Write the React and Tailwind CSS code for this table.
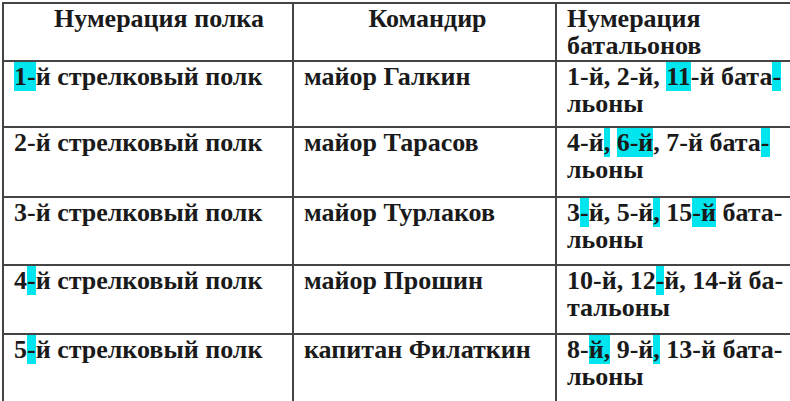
import React from "react";

const H = ({ children }) => <span className="bg-[#00e5ee]">{children}</span>;

const rows = [
  {
    h: "h-[66px]",
    a: (<><H>1-</H>й стрелковый полк</>),
    b: "майор Галкин",
    c: (<>1-й, 2-й, <H>11</H>-й бата<H>-</H><br />льоны</>),
  },
  {
    h: "h-[70px]",
    a: "2-й стрелковый полк",
    b: "майор Тарасов",
    c: (<>4-й<H>,</H> <H>6-й</H>, 7-й бата<H>-</H><br />льоны</>),
  },
  {
    h: "h-[68px]",
    a: "3-й стрелковый полк",
    b: "майор Турлаков",
    c: (<>3<H>-</H>й, 5-й<H>,</H> 15<H>-й</H> бата-<br />льоны</>),
  },
  {
    h: "h-[69px]",
    a: (<>4<H>-</H>й стрелковый полк</>),
    b: "майор Прошин",
    c: (<>10-й, 12<H>-</H>й, 14-й ба-<br />тальоны</>),
  },
  {
    h: "h-[80px]",
    a: (<>5<H>-</H>й стрелковый полк</>),
    b: "капитан Филаткин",
    c: (<>8-<H>й,</H> 9-й<H>,</H> 13-й бата-<br />льоны</>),
  },
];

export default function App() {
  return (
    <div className="w-[790px] h-[401px] overflow-hidden bg-white text-[#1a1a1a] font-bold text-[26px] leading-[27px] font-['Liberation_Serif','Times_New_Roman',serif]">
      <div className="ml-[2px] mt-[2px] w-[820px] grid grid-cols-[290px_263px_1fr] border-l-2 border-t-2 border-[#444]">
        <div className="h-[58px] border-r-2 border-b-2 border-[#444] pt-[1px] text-center pl-[22px]">
          Нумерация полка
        </div>
        <div className="h-[58px] border-r-2 border-b-2 border-[#444] pt-[1px] text-center pl-[6px]">
          Командир
        </div>
        <div className="h-[58px] border-b-2 border-[#444] pt-[1px] pl-[10px]">
          Нумерация
          <br />
          батальонов
        </div>
        {rows.map((r, i) => (
          <React.Fragment key={i}>
            <div className={`${r.h} border-r-2 border-b-2 border-[#444] pt-[1px] pl-[10px] whitespace-nowrap`}>
              {r.a}
            </div>
            <div className={`${r.h} border-r-2 border-b-2 border-[#444] pt-[1px] pl-[10px] whitespace-nowrap`}>
              {r.b}
            </div>
            <div className={`${r.h} border-b-2 border-[#444] pt-[1px] pl-[10px] whitespace-nowrap`}>
              {r.c}
            </div>
          </React.Fragment>
        ))}
      </div>
    </div>
  );
}
